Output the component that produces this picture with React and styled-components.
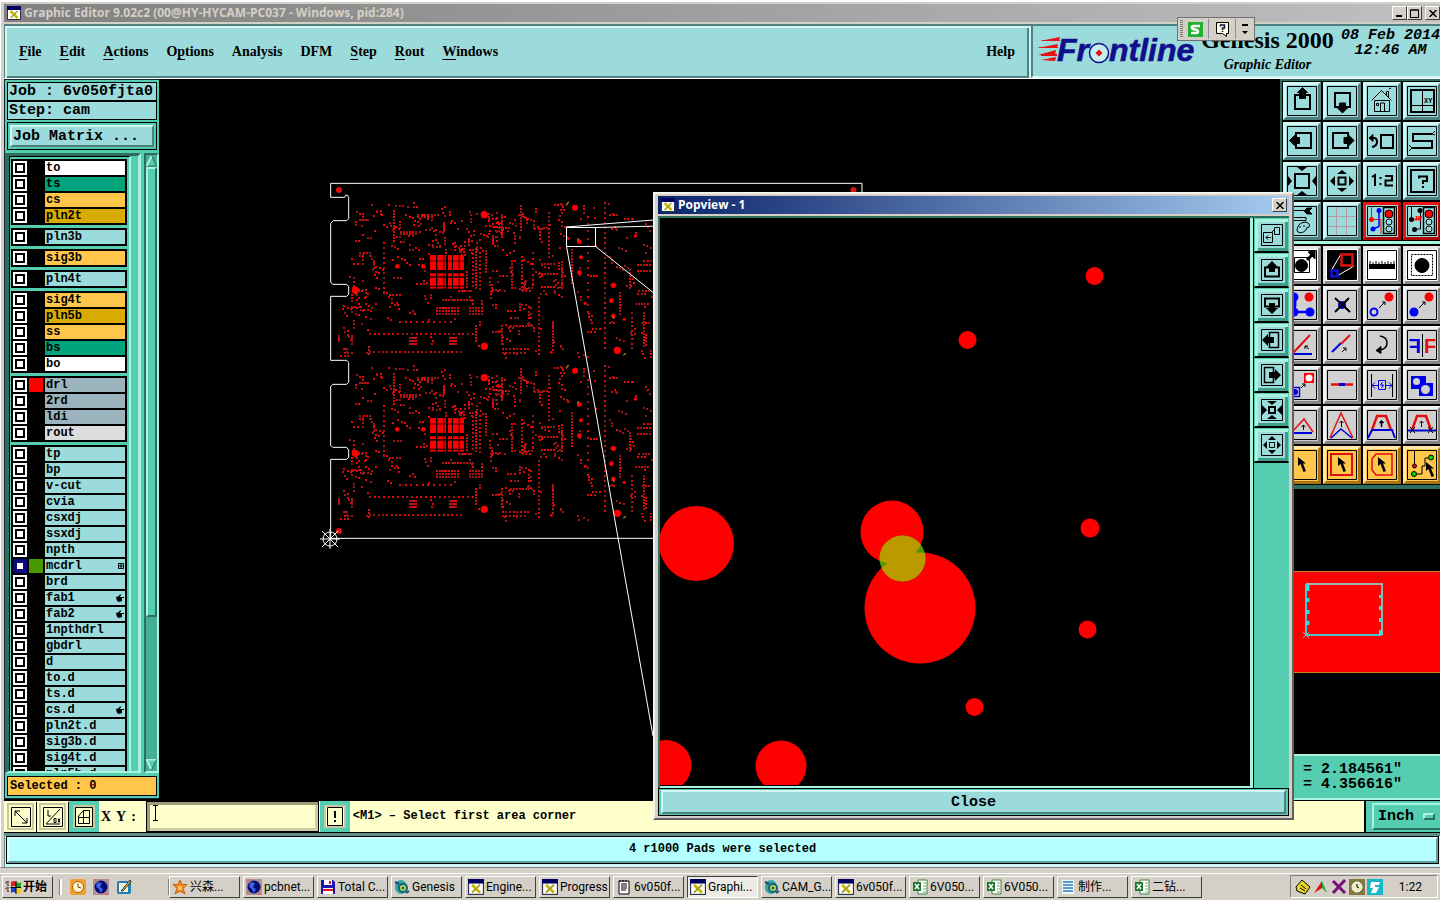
import React from 'react';
import styled, { createGlobalStyle, css } from 'styled-components';

const GlobalStyle = createGlobalStyle`
  * {
    box-sizing: border-box;
  }
  body {
    margin: 0;
    background: #000;
    overflow: hidden;
  }
  button, input, select {
    font: inherit;
    color: inherit;
    margin: 0;
    padding: 0;
    border-radius: 0;
  }
  svg {
    display: block;
    flex: none;
  }
`;

const mono = '"Liberation Mono", "Courier New", monospace';
const serif = '"Liberation Serif", "Times New Roman", serif';
const ui = 'Roboto, "Liberation Sans", "Noto Sans CJK SC", sans-serif';

const cyan = '#9bdbdb';
const cyanLight = '#d3f6f4';
const cyanDark = '#4f8080';
const teal = '#55cdb0';
const tealLight = '#a9f3df';
const tealDark = '#2e6e5e';
const chrome = '#d4d0c8';
const cream = '#ffffcc';

const bevel = (width, light, dark) => css`
  border: ${width}px solid;
  border-color: ${light} ${dark} ${dark} ${light};
`;

/* ---------- window shell ---------- */

const Desktop = styled.div`
  position: relative;
  display: flex;
  flex-direction: column;
  height: 100vh;
  overflow: hidden;
  background: ${chrome};
`;

const EditorWindow = styled.div`
  flex: 1;
  min-height: 0;
  display: flex;
  flex-direction: column;
  padding: 2px 0 0 3px;
  border-top: 2px solid #fff;
  border-left: 1px solid #fff;
  border-bottom: 1px solid #808080;
`;

const TitleBar = styled.div`
  display: flex;
  align-items: center;
  flex: none;
  height: 18px;
  margin-bottom: 2px;
  padding-left: 3px;
  gap: 3px;
  color: ${p => (p.$active ? '#fff' : chrome)};
  background: ${p =>
    p.$active
      ? 'linear-gradient(90deg, #0a246a, #a6caf0)'
      : 'linear-gradient(90deg, #808080, #c0c0c0)'};
  font: bold 12px/16px 'Open Sans', 'Noto Sans', sans-serif;
  white-space: nowrap;
`;

const TitleText = styled.span`
  flex: 1;
`;

const WindowButton = styled.button`
  display: flex;
  align-items: center;
  justify-content: center;
  width: 15px;
  height: 14px;
  background: ${chrome};
  color: #000;
  border: 1px solid;
  border-color: #fff #404040 #404040 #fff;
`;

const WindowButtons = styled.div`
  display: flex;
  flex: none;
  width: ${p => p.$width}px;
  overflow: hidden;
  ${WindowButton} {
    flex: none;
  }
  ${WindowButton}:nth-child(3) {
    margin-left: 3px;
  }
`;

const Header = styled.header`
  display: flex;
  flex: none;
  height: 55px;
  background: ${cyanLight};
  border-top: 2px solid ${cyanDark};
  border-bottom: 1px solid #fff;
`;

const MenuBar = styled.nav`
  flex: 1;
  display: flex;
  align-items: center;
  gap: 18px;
  padding: 0 14px;
  border-left: 1px solid ${cyanDark};
  background: ${cyan};
  font: bold 14px ${serif};
  box-shadow: inset 2px 2px ${cyanLight}, inset -2px -2px ${cyanDark};
`;

const MenuItem = styled.button`
  background: none;
  border: 0;
  &:last-child {
    margin-left: auto;
  }
  u {
    text-underline-offset: 3px;
  }
`;

const Brand = styled.div`
  display: flex;
  flex: none;
  width: 409px;
  margin-left: 2px;
  padding: 2px 0 0 4px;
  overflow: hidden;
  border-left: 2px solid ${cyanDark};
  border-bottom: 2px solid ${cyanLight};
  background: ${cyan};
`;

const Product = styled.div`
  width: 136px;
  margin-left: 3px;
  text-align: center;
  font: bold 24px/24px ${serif};
  white-space: nowrap;
  em {
    display: block;
    font-size: 14px;
    line-height: 26px;
  }
`;

const Clock = styled.time`
  flex: 1;
  padding-left: 6px;
  text-align: center;
  font: italic bold 15px/15px ${mono};
  white-space: nowrap;
`;

const Main = styled.main`
  flex: 1;
  min-height: 0;
  display: flex;
  background: #000;
`;

/* ---------- layer list ---------- */

const Sidebar = styled.aside`
  flex: none;
  display: flex;
  flex-direction: column;
  width: 155px;
  margin-bottom: 1px;
  padding: 2px;
  border: 1px solid #123;
  border-right: 0;
  background: ${teal};
`;

const InfoLine = styled.div`
  height: 19px;
  padding-left: 1px;
  overflow: hidden;
  border: 1px solid #000;
  background: ${cyan};
  font: bold 15px/18px ${mono};
  white-space: pre;
`;

const MatrixFrame = styled.div`
  margin: 2px 0 3px;
  padding: 2px;
  border: 1px solid #000;
`;

const MatrixButton = styled.button`
  display: block;
  width: 100%;
  height: 22px;
  padding-left: 1px;
  background: ${cyan};
  ${bevel(2, cyanLight, cyanDark)}
  font: bold 15px/15px ${mono};
  text-align: left;
`;

const LayerPane = styled.div`
  flex: 1;
  min-height: 0;
  display: flex;
  gap: 3px;
  margin: 0 -2px;
`;

const LayerScroll = styled.div`
  flex: 1;
  overflow: hidden;
  border: solid;
  border-width: 3px 3px 2px 4px;
  border-color: ${tealDark} ${tealLight} ${tealLight} ${tealDark};
`;

const LayerList = styled.div`
  display: flex;
  flex-direction: column;
  gap: 3px;
  width: 122px;
  padding: 2px 2px 0 1px;
  border: 1px solid #000;
  border-right: 2px solid ${tealLight};
`;

const LayerGroup = styled.div`
  padding: 2px 2px 0;
  background: #000;
`;

const LayerRow = styled.label`
  display: flex;
  gap: 2px;
  height: 16px;
  padding-bottom: 2px;
`;

const LayerCheck = styled.input`
  appearance: none;
  flex: none;
  width: 14px;
  height: 14px;
  background: #fff;
  border: ${p => (p.$active ? '4px solid #0a0a80' : '2px solid #fff')};
  box-shadow: inset 0 0 0 ${p => (p.$active ? '0' : '2px')} #000;
`;

const LayerColor = styled.span`
  flex: none;
  width: 14px;
  background: ${p => p.$color || '#000'};
`;

const LayerName = styled.span`
  flex: 1;
  display: flex;
  align-items: center;
  justify-content: space-between;
  padding: 0 1px;
  background: ${p => p.$fill};
  font: bold 12px/14px ${mono};
  white-space: nowrap;
`;

const ScrollTrack = styled.div`
  display: flex;
  flex-direction: column;
  width: 15px;
  border: 2px solid;
  border-color: ${tealDark} ${tealLight} ${tealLight} ${tealDark};
  background: #45ae97;
`;

const ScrollThumb = styled.div`
  flex: 0 0 73%;
  background: ${teal};
  ${bevel(2, tealLight, tealDark)}
`;

const ScrollSpace = styled.div`
  flex: 1;
`;

const SelectedCount = styled.output`
  display: block;
  height: 20px;
  margin-top: 3px;
  padding-left: 2px;
  border: 1px solid #000;
  background: #ffc64b;
  font: bold 12px/18px ${mono};
`;

/* ---------- board canvas ---------- */

const Canvas = styled.section`
  flex: 1;
  min-width: 0;
  overflow: hidden;
  background: #000;
`;

/* ---------- tool column ---------- */

const ToolColumn = styled.aside`
  flex: none;
  display: flex;
  flex-direction: column;
  width: 160px;
  overflow: hidden;
  border-top: 2px solid ${tealDark};
  border-left: 2px solid ${tealDark};
`;

const ToolGrid = styled.div`
  display: grid;
  grid-template-columns: repeat(4, 38px);
  gap: 2px;
  padding: 1px 0 1px 1px;
  background: #000;
  & + & {
    border-top: 3px solid ${tealLight};
    padding-top: 2px;
    border-bottom: 4px solid ${tealDark};
  }
`;

const toolTones = {
  cyan: [cyan, cyanLight, cyanDark],
  red: [cyan, '#f01010', '#b00808'],
  white: ['#fff', '#e4e4e4', '#8c8c8c'],
  gray: ['#d0d0d0', '#f2f2f2', '#858585'],
  orange: ['#ffc64b', '#ffe7ae', '#a87510']
};

const ToolButton = styled.button`
  display: flex;
  align-items: center;
  justify-content: center;
  width: 38px;
  height: 38px;
  background: ${p => toolTones[p.$tone][0]};
  ${p => bevel(3, toolTones[p.$tone][1], toolTones[p.$tone][2])}
`;

const Overview = styled.div`
  flex: 1;
  min-height: 0;
  overflow: hidden;
  background: #000;
`;

const Coordinates = styled.div`
  flex: none;
  height: 46px;
  padding: 6px 0 0 21px;
  border-top: 2px solid ${tealLight};
  border-bottom: 2px solid ${tealLight};
  background: ${teal};
  font: bold 15px/15px ${mono};
  white-space: pre;
`;

/* ---------- bottom bars ---------- */

const CommandBar = styled.div`
  flex: none;
  display: flex;
  gap: 1px;
  height: 33px;
  padding-left: 1px;
  border-top: 1px solid #000;
  border-bottom: 1px solid #000;
  background: ${cream};
  font: bold 12px/31px ${mono};
`;

const SnapButton = styled.button`
  display: flex;
  align-items: center;
  justify-content: center;
  width: ${p => (p.$on ? 30 : 31)}px;
  background: ${cream};
  border: ${p => (p.$on ? `4px solid ${teal}` : `2px solid ${cream}`)};
  box-shadow: ${p =>
    p.$on ? 'inset 0 0 0 2px #c8c8a0' : 'inset 0 0 0 2px #c8c8a0, 1px 1px #000'};
`;

const XYField = styled.label`
  position: relative;
  display: flex;
  padding-left: 1px;
  gap: 10px;
  white-space: pre;
  font: bold 14px/31px ${serif};
  word-spacing: 2px;
`;

const XYInput = styled.input`
  width: 173px;
  padding-left: 4px;
  background: ${cream};
  border: 1px solid #000;
  box-shadow: inset 3px 3px #a09c78, inset -3px -3px #cfcfa6;
`;

const TextPointer = styled.span`
  position: absolute;
  left: 52px;
  top: 4px;
`;

const Prompt = styled.div`
  flex: 1;
  padding-left: 2px;
`;

const UnitFrame = styled.div`
  width: 76px;
  padding: 2px 0 2px 6px;
  border-left: 2px solid #000;
  background: ${teal};
`;

const UnitButton = styled.button`
  display: flex;
  align-items: center;
  justify-content: space-between;
  width: 100%;
  height: 27px;
  padding: 0 5px 0 4px;
  background: ${teal};
  ${bevel(2, tealLight, tealDark)}
  border-right: 0;
  font: bold 15px/15px ${mono};
`;

const UnitMark = styled.span`
  width: 12px;
  height: 7px;
  ${bevel(2, tealLight, tealDark)}
`;

const StatusFrame = styled.div`
  flex: none;
  height: 34px;
  padding: 1px 2px 2px;
  border-top: 3px solid #5f8f8b;
  border-left: 1px solid #5f8f8b;
  background: #cff6f4;
`;

const StatusText = styled.div`
  height: 26px;
  background: #b3ffff;
  ${bevel(2, '#d9ffff', '#5d9c9c')}
  outline: 1px solid #000;
  font: bold 12px/21px ${mono};
  text-align: center;
`;

/* ---------- popview window ---------- */

const Popview = styled.section`
  position: absolute;
  left: 653px;
  top: 192px;
  display: flex;
  flex-direction: column;
  width: 641px;
  height: 628px;
  padding: 2px 3px;
  background: ${chrome};
  border: 2px solid;
  border-color: #f4f2ee #606060 #606060 #f4f2ee;
`;

const PopBody = styled.div`
  flex: 1;
  min-height: 0;
  display: flex;
  background: ${teal};
  border: solid ${tealDark};
  border-width: 2px 0 0 2px;
`;

const PopCanvas = styled.div`
  flex: 1;
  overflow: hidden;
  background: #000;
  border: solid ${tealLight};
  border-width: 0 3px 2px 0;
`;

const PopTools = styled.div`
  display: flex;
  flex-direction: column;
  align-items: flex-start;
  width: 36px;
  border-left: 1px solid #000;
`;

const PopTool = styled.button`
  display: flex;
  align-items: center;
  justify-content: center;
  width: 35px;
  height: 35px;
  background: ${cyan};
  border: 1px solid ${teal};
  border-bottom: 2px solid #000;
  box-shadow: inset 3px 3px ${tealLight}, inset -3px -3px #3f9c86;
`;

const CloseFrame = styled.div`
  flex: none;
  padding: 1px 2px;
  border: 1px solid #000;
  background: ${teal};
`;

const CloseButton = styled.button`
  display: block;
  width: 100%;
  height: 24px;
  background: ${cyan};
  ${bevel(2, cyanLight, cyanDark)}
  font: bold 15px/15px ${mono};
`;

/* ---------- input method bar ---------- */

const ImeBar = styled.div`
  position: absolute;
  right: 185px;
  top: 17px;
  display: flex;
  align-items: center;
  gap: 5px;
  width: 78px;
  height: 24px;
  padding: 0 2px;
  background: ${chrome};
  border: 1px solid #707070;
`;

const ImeGrip = styled.span`
  width: 3px;
  height: 18px;
  background: repeating-linear-gradient(#777 0 1px, ${chrome} 1px 2px);
`;

const ImeButton = styled.button`
  display: flex;
  align-items: center;
  justify-content: center;
  height: 20px;
  background: none;
  border: 0;
  & + & {
    padding-left: 6px;
    border-left: 1px solid #8a8a9a;
  }
`;

/* ---------- taskbar ---------- */

const Taskbar = styled.footer`
  flex: none;
  display: flex;
  align-items: center;
  height: 32px;
  padding: 5px 2px 0 2px;
  background: linear-gradient(${chrome} 5px, #fff 5px 6px, ${chrome} 6px);
  font: 12px/18px ${ui};
`;

const TaskButton = styled.button`
  display: flex;
  align-items: center;
  gap: 2px;
  flex: none;
  width: ${p => p.$width || 71}px;
  height: 22px;
  padding-left: 2px;
  white-space: nowrap;
  background: ${p => (p.$pressed ? '#edebe6' : chrome)};
  border: 1px solid;
  border-color: ${p =>
    p.$pressed ? '#404040 #fff #fff #404040' : '#fff #404040 #404040 #fff'};
  font-weight: ${p => (p.$bold ? 'bold' : 'normal')};
`;

const QuickLaunch = styled.div`
  display: flex;
  gap: 7px;
  width: 109px;
  margin: 0 0 0 7px;
  padding-left: 8px;
  border-left: 2px solid #fff;
  border-right: 1px solid #808080;
  box-shadow: -1px 0 #808080;
`;

const QuickLink = styled.button`
  border: 0;
  background: none;
`;

const TaskList = styled.div`
  flex: 1;
  display: flex;
  gap: 3px;
`;

const Tray = styled.div`
  display: flex;
  align-items: center;
  gap: 2px;
  width: 148px;
  height: 23px;
  padding: 0 15px 0 4px;
  border: 1px solid;
  border-color: #808080 #fff #fff #808080;
  time {
    margin-left: auto;
  }
`;

/* ---------- board data, in thirds of a canvas unit ---------- */

const HALF = 489;

// x, y, count, step x, step y
const runs = [
  [150, 491, 23, 14, 0],
  [150, 545, 22, 13, 0],
  [240, 456, 10, 17, 0],
  [370, 389, 11, 9, 0],
  [352, 415, 8, 9, 0], [352, 423, 8, 9, 0], [352, 431, 8, 9, 0],
  [450, 415, 5, 9, 0], [450, 423, 5, 9, 0], [450, 431, 5, 9, 0],
  [270, 503, 4, 6, 0], [270, 512, 4, 6, 0], [270, 521, 4, 6, 0],
  [390, 503, 4, 6, 0], [390, 512, 4, 6, 0], [390, 521, 4, 6, 0],
  [338, 512, 1, 6, 0], [332, 500, 1, 6, 0], [336, 521, 1, 6, 0],
  [295, 134, 7, 10, 0], [295, 142, 3, 10, 0],
  [242, 192, 6, 9, 0], [242, 186, 6, 9, 0],
  [222, 122, 11, 0, 9],
  [192, 220, 11, 0, 15],
  [460, 240, 10, 0, 12], [468, 236, 14, 0, 9],
  [440, 305, 6, 0, 9],
  [480, 248, 10, 0, 12],
  [497, 244, 8, 0, 9],
  [577, 274, 10, 0, 9],
  [605, 262, 10, 0, 11],
  [546, 136, 8, 0, 9], [532, 130, 7, 0, 14],
  [604, 108, 9, 0, 9],
  [372, 160, 5, 0, 6],
  [657, 384, 14, 0, 13],
  [805, 140, 14, 0, 22],
  [757, 240, 12, 0, 9],
  [700, 456, 7, 0, 9],
  [688, 130, 12, 0, 12],
  [727, 306, 7, 0, 8],
  [640, 250, 7, 0, 16],
  [666, 283, 5, 9, 0], [666, 311, 6, 9, 0], [666, 352, 5, 9, 0],
  [855, 100, 30, 0, 15],
  [931, 300, 7, 0, 9],
  [953, 286, 5, 9, 0], [953, 304, 5, 9, 0], [958, 364, 4, 10, 0],
  [972, 430, 12, 0, 9],
  [936, 430, 9, 0, 13],
  [900, 370, 8, 0, 9],
  [948, 402, 5, 9, 0],
  [548, 536, 8, 11, 0], [548, 548, 7, 11, 0],
  [572, 468, 8, 9, 0], [468, 468, 6, 0, 9],
  [546, 468, 7, 0, 9],
  [57, 497, 4, 0, 5], [97, 497, 4, 0, 5], [72, 536, 3, 5, 0],
  [120, 150, 5, 6, 0],
  [418, 364, 6, 7, 0]
];

// x, y, width, height, number of small clusters
const fields = [
  [100, 95, 130, 140, 22],
  [230, 95, 230, 145, 42],
  [460, 120, 150, 110, 30],
  [85, 240, 80, 160, 26],
  [160, 240, 165, 155, 15],
  [360, 200, 130, 45, 14],
  [500, 235, 120, 130, 22],
  [610, 95, 125, 275, 36],
  [745, 95, 80, 460, 16],
  [860, 95, 135, 180, 16],
  [860, 280, 135, 260, 20],
  [60, 370, 400, 80, 24],
  [60, 450, 90, 105, 12],
  [460, 380, 190, 170, 26],
  [660, 450, 75, 100, 6]
];

const padPaths = (() => {
  let seed = 4711;
  const rand = () => {
    seed = (seed * 16807) % 2147483647;
    return seed / 2147483647;
  };
  const out = { bright: '', dim: '' };
  const put = (x, y) => {
    const key = rand() > 0.42 ? 'bright' : 'dim';
    [0, HALF].forEach(shift => {
      out[key] += `M${Math.round(x / 3)} ${Math.round((y + shift) / 3)}h2v2h-2z`;
    });
  };
  runs.forEach(([x, y, n, dx, dy]) => {
    for (let i = 0; i < n; i++) put(x + i * dx - 3, y + i * dy - 3);
  });
  fields.forEach(([x, y, w, h, n]) => {
    for (let i = 0; i < n; i++) {
      const px = x + rand() * w;
      const py = y + rand() * h;
      const across = rand() > 0.5;
      const len = 1 + Math.floor(rand() * 3);
      const slant = rand() > 0.6 ? 5 : 0;
      for (let k = 0; k < len; k++) {
        put(px + (across ? k * 10 : k * slant), py + (across ? k * slant : k * 10));
      }
    }
  });
  return out;
})();

const holes = [
  [493, 134, 11], [106, 361, 11], [232, 289, 7], [310, 289, 7], [493, 529, 11],
  [765, 113, 9], [778, 215, 7], [783, 262, 6], [778, 308, 7], [880, 346, 8],
  [874, 392, 7], [880, 438, 7], [892, 541, 11], [913, 448, 5], [796, 400, 5],
  [745, 206, 4], [694, 547, 4], [946, 198, 5]
];

const gridColumns = [[330, 18], [352, 18], [373, 5], [384, 12], [399, 17], [419, 13]];
const gridRows = [[255, 17], [274, 26], [310, 9], [323, 24], [350, 6]];

const BoardHalf = ({ shift }) => (
  <g transform={`translate(0 ${shift})`} fill="#f00">
    {holes.map(([x, y, r]) => <circle key={`${x}-${y}`} cx={x} cy={y} r={r} />)}
    {gridColumns.map(([x, w]) =>
      gridRows.map(([y, h]) => <rect key={`${x}-${y}`} x={x} y={y} width={w} height={h} />)
    )}
    <path d="M738 106l8-10M774 204v8M878 440l5 6M910 556l8-6" stroke="#b87a20" strokeWidth="4" />
  </g>
);

const Board = () => (
  <svg width="1121" height="721" viewBox="159 79 1121 721" role="img" aria-label="Board">
    <g transform="translate(320 170)">
      <path d={padPaths.bright} fill="#e00808" shapeRendering="crispEdges" />
      <path d={padPaths.dim} fill="#981818" shapeRendering="crispEdges" />
      <g transform="scale(0.33333)">
        <BoardHalf shift={0} />
        <BoardHalf shift={HALF} />
        <circle cx="57" cy="60" r="9" fill="#e01010" />
        <circle cx="57" cy="1083" r="9" fill="#e01010" />
        <circle cx="1600" cy="60" r="9" fill="#e01010" />
        <path
          d="M1626 1105V40H32V82H74L77 76H83L86 82V146L80 152H40L32 160V336L38 343H80L86 350V373L80 379H32V571H80L86 577V637L80 643H38L32 650V826L38 832H80L86 840V862L80 868H32V1105Z"
          fill="none"
          stroke="#fff"
          strokeWidth="3"
        />
      </g>
    </g>
    <g fill="none" stroke="#fff">
      <path d="M566.5 227.5H595.5V246.5H566.5Z" />
      <path d="M566 227L660 219.500M595 227.500L660 226M595 246L660 298M566.500 246L653 736" />
      <circle cx="330" cy="539" r="7" />
      <path d="M330 529V549M320 539H340M322 531L338 547M338 531L322 547" />
    </g>
  </svg>
);

const OverviewMap = () => (
  <svg width="158" height="265" viewBox="1282 489 158 265" role="img" aria-label="Overview">
    <path d="M1281 571.500H1441V672.500H1281Z" fill="#f00" stroke="#d08020" />
    <path d="M1306 584H1382V635" fill="none" stroke="#9ab4b4" strokeWidth="2" />
    <path d="M1306 584V635H1382" fill="none" stroke="#45c8d0" strokeWidth="2" />
    <path
      d="M1308 585v6M1308 598v4M1308 610v4M1308 621v4M1380.500 595v3M1380.500 606v4M1380.500 618v4M1380.500 630v5"
      stroke="#20e8e8"
      strokeWidth="3"
    />
    <path d="M1303 632l6 6M1309 632l-6 6" stroke="#9ab4b4" />
  </svg>
);

const PopviewDrawing = () => (
  <svg width="590" height="567" viewBox="660 218 590 567" role="img" aria-label="Magnified area">
    <defs>
      <clipPath id="drilled">
        <circle cx="892" cy="532" r="31.500" />
        <circle cx="920" cy="608" r="55.500" />
      </clipPath>
    </defs>
    <g fill="#f00">
      <circle cx="696.500" cy="543.500" r="37.500" />
      <circle cx="892" cy="532" r="31.500" />
      <circle cx="920" cy="608" r="55.500" />
      <circle cx="967.500" cy="340" r="9" />
      <circle cx="1094.500" cy="276" r="9" />
      <circle cx="1090" cy="528" r="9.500" />
      <circle cx="1087.500" cy="629.500" r="9" />
      <circle cx="974.500" cy="707" r="9" />
      <circle cx="666" cy="765.500" r="25.500" />
      <circle cx="781" cy="766" r="25.500" />
    </g>
    <circle cx="902.500" cy="558.500" r="23" fill="#4b9900" />
    <circle cx="902.500" cy="558.500" r="23" fill="#bb9a00" clipPath="url(#drilled)" />
  </svg>
);

/* ---------- icons ---------- */

const AppIcon = ({ size = 14 }) => (
  <svg width={size} height={size} viewBox="0 0 14 14">
    <path d="M0 0h14v14H0z" fill="#303050" />
    <path d="M0 0h14v4H0z" fill="#000060" />
    <path d="M1 4h12v9H1z" fill="#fff" />
    <path d="M3.500 5l7 7" stroke="#c8b800" strokeWidth="2.500" />
    <path d="M10.500 5l-7 7" stroke="#a09c20" strokeWidth="1.500" />
  </svg>
);

const Cursor = ({ x, y }) => (
  <path
    transform={`translate(${x} ${y})`}
    d="M0 0v9l2.500-2 3 8 2.500-1-3-7.500h3z"
    fill="#000"
    stroke="none"
  />
);

const Signal = () => (
  <g>
    <path d="M16.500 1.500h11v26h-11z" fill="none" stroke="#000" strokeWidth="1.500" />
    <circle cx="22" cy="8" r="4" fill="#f00" stroke="#000" />
    <circle cx="22" cy="16" r="3" fill="none" stroke="#000" />
    <circle cx="22" cy="23" r="3" fill="none" stroke="#000" />
  </g>
);

const letter = { fontFamily: 'Liberation Mono, monospace', fontWeight: 700, stroke: 'none' };

const glyphs = {
  up: <><path d="M8 9h15v14H8z" strokeWidth="2" /><path d="M15.500 1.500l5 5h-2v6h-6v-6h-2z" fill="#000" /></>,
  down: <><path d="M8 7h15v14H8z" strokeWidth="2" /><path d="M15.500 27l5-5h-2v-5h-6v5h-2z" fill="#000" /></>,
  home: (
    <path d="M4.500 14.500l10-10 10 10M7.500 14.500v11h15v-11zM17.500 25v-8h-4v8M9.500 17.500h2v2h-2zM19.500 9V5.500h2V11M22 3l2-1" />
  ),
  origin: (
    <>
      <path d="M4 4h23v22H4z" strokeWidth="2" />
      <path d="M15.500 4v22M4 19.500h23" />
      <text x="17" y="17" fontSize="7" fill="#000" {...letter}>XY</text>
    </>
  ),
  left: <><path d="M9 7h15v15H9z" strokeWidth="2" /><path d="M2.500 14.500l5-5v2h5v6h-5v2z" fill="#000" /></>,
  right: <><path d="M6 7h15v15H6z" strokeWidth="2" /><path d="M27 14.500l-5-5v2h-5v6h5v2z" fill="#000" /></>,
  previous: (
    <>
      <path d="M14 9h12v13H14z" strokeWidth="2" />
      <path d="M5 12h2q3 0 3 4t-5 5" strokeWidth="2" />
      <path d="M2 12l4-3.500v7z" fill="#000" />
    </>
  ),
  serpentine: (
    <>
      <path d="M25 8H6v7h19v7H5" strokeWidth="2" />
      <path d="M25 8l3-3M25 8l3 1M5 22l-3-3M5 22l-3 3" />
    </>
  ),
  fit: (
    <>
      <path d="M8 8h14v14H8z" strokeWidth="2" />
      <path d="M10 1h10l-5 4zM10 29h10l-5-4zM1 10v10l4-5zM29 10v10l-4-5z" fill="#000" stroke="none" />
    </>
  ),
  spread: (
    <>
      <path d="M11.500 11.500h7v7h-7z" strokeWidth="2" />
      <path d="M10 8h10l-5-4zM10 22h10l-5 4zM8 10v10l-5-5zM22 10v10l5-5z" fill="#000" stroke="none" />
    </>
  ),
  scale: <path d="M5 11l3-2v11M13.500 11v2M13.500 17v2M18 10h7v4.500h-6.500V19.500H26" strokeWidth="2" />,
  help: (
    <>
      <path d="M4 4h23v22H4z" strokeWidth="2" />
      <path d="M12 12.500V10.500h8V15h-4v3M16 20v2" strokeWidth="2" />
    </>
  ),
  setup: (
    <>
      <path d="M0 4.500h18M8 11.500h11v3H3v-3z" />
      <path d="M17 5l3-3h5l-3 3 3 3h-5z" fill="#000" />
      <path d="M10 25q0-8 8-9 6 1 4 5-3 0-3 3-5 5-9 1zM13 20v2M17 19v2" />
    </>
  ),
  grid: <path d="M9.500 1v28M19.500 1v28M1 10.500h28M1 20.500h28" stroke="#b59aa2" />,
  netColor: (
    <>
      <path d="M4.500 0v13.500H14V28" stroke="#f00" />
      <path d="M12 4v16.500L6 23" stroke="#00f" strokeWidth="1.500" />
      <circle cx="4.500" cy="13.500" r="2.500" fill="#f00" stroke="none" />
      <circle cx="12" cy="4.500" r="2.500" fill="#00f" stroke="none" />
      <circle cx="6" cy="23" r="2.500" fill="#00f" stroke="none" />
      <Signal />
    </>
  ),
  netBlack: (
    <>
      <path d="M4.500 0v13.500M13.500 4v19H8" />
      <path d="M6 13.500h8M9.500 10v3M12 10v3M14 10v3" stroke="#f00" strokeWidth="1.500" />
      <circle cx="4.500" cy="13.500" r="2.500" fill="#000" stroke="none" />
      <circle cx="13" cy="4.500" r="2.500" fill="#000" stroke="none" />
      <circle cx="7.500" cy="23.500" r="2.500" fill="#000" stroke="none" />
      <Signal />
    </>
  ),
  select: (
    <>
      <path d="M7.500 7.500h15v15h-15z" />
      <circle cx="14.500" cy="15.500" r="6" fill="#000" />
      <path d="M20 10l6-6" strokeWidth="3" />
      <path d="M28 1v8l-7-7z" fill="#000" />
    </>
  ),
  window: (
    <>
      <path d="M1 1h28v28H1z" fill="#000" />
      <path d="M14 4L4 21M27 16L10 26" stroke="#fff" />
      <path d="M14.500 4.500h11v11h-11z" stroke="#e01010" strokeWidth="2.500" />
      <path d="M4.500 20.500h6v6h-6z" stroke="#1010d0" strokeWidth="2.500" />
    </>
  ),
  ruler: (
    <>
      <path d="M2 14h26v5H2z" fill="#000" stroke="none" />
      <path d="M3 11v4M6 12v4M9 11v4M12 12v4M15 11v4M18 12v4M21 11v4M24 12v4M27 11v4" />
    </>
  ),
  area: <><path d="M4.500 4.500h21v21h-21z" strokeDasharray="2 1" /><circle cx="15" cy="15.500" r="7" fill="#000" /></>,
  polyline: (
    <>
      <path d="M7 7q3 8-1 15h20" stroke="#00f" strokeWidth="2.500" />
      <g fill="#00f" stroke="none">
        <circle cx="7" cy="7" r="4.500" />
        <circle cx="7" cy="22" r="4.500" />
        <circle cx="23" cy="22" r="4.500" />
      </g>
      <circle cx="22" cy="7" r="4.500" fill="#f00" stroke="none" />
    </>
  ),
  remove: <><circle cx="15" cy="15" r="4" fill="#0000d8" stroke="none" /><path d="M8 8l15 14M22 8L8 22" strokeWidth="2" /></>,
  copy: (
    <>
      <circle cx="7" cy="22" r="3.500" stroke="#00f" strokeWidth="2" />
      <circle cx="22" cy="7" r="4.500" fill="#f00" stroke="none" />
      <path d="M12 18l6-6M15 12h3v3" />
    </>
  ),
  move: (
    <>
      <circle cx="7" cy="22" r="4.500" fill="#00f" stroke="none" />
      <circle cx="22" cy="7" r="4.500" fill="#f00" stroke="none" />
      <path d="M12 18l6-6M15 12h3v3" />
    </>
  ),
  rotate: (
    <>
      <path d="M1 24h24" stroke="#00d" strokeWidth="2" />
      <path d="M6 23L23 5" stroke="#e01010" strokeWidth="2" />
      <path d="M22 19l-4-3M18 19v-3h3" />
    </>
  ),
  stretch: (
    <>
      <path d="M5 22l9-9" stroke="#00d" strokeWidth="2" />
      <path d="M14 14l9-9" stroke="#e01010" strokeWidth="2" />
      <path d="M15 22l4-4M16 18h3v3" />
    </>
  ),
  turn: <><path d="M13 6q7 1 7 7t-7 7" strokeWidth="1.500" /><path d="M9 20.500l5-4v7z" fill="#000" /></>,
  mirror: (
    <>
      <path d="M15.500 4v23" />
      <text x="17" y="23" fontSize="20" fill="#e01010" {...letter} fontFamily="Liberation Sans">F</text>
      <g transform="scale(-1 1)">
        <text x="-14" y="23" fontSize="20" fill="#00d" {...letter} fontFamily="Liberation Sans">F</text>
      </g>
    </>
  ),
  swap: (
    <>
      <path d="M17 3h10v10H17z" fill="#f00" stroke="none" />
      <circle cx="22" cy="8" r="3.500" fill="#fff" stroke="none" />
      <path d="M3.500 17.500h9v9h-9z" stroke="#00d" strokeWidth="1.500" />
      <circle cx="8" cy="22" r="3" fill="#00d" stroke="none" />
      <path d="M14 18l4-4M15 14h3v3" />
    </>
  ),
  breakLine: <><path d="M4 14.500h22" stroke="#e01010" strokeWidth="2.500" /><path d="M12 14.500h6" stroke="#00d" strokeWidth="3" /></>,
  spacing: (
    <>
      <path d="M4.500 4v23M25.500 4v23" />
      <path d="M5 15.500h6M19 15.500h6M8 12.500l-3 3 3 3M22 12.500l3 3-3 3M11.500 10.500h7v9h-7zM15.500 12l-2 3h3l-2 3" stroke="#00d" />
    </>
  ),
  merge: (
    <>
      <path d="M4 6h15v7h7v13H12v-7H4z" fill="#0000e8" stroke="none" />
      <circle cx="9.500" cy="11.500" r="3.500" fill="#d0d0d0" stroke="none" />
      <circle cx="18.500" cy="19.500" r="4.500" fill="#d0d0d0" stroke="none" />
    </>
  ),
  ridge: <><path d="M5 22L17 9l9 13" stroke="#e01010" strokeWidth="1.500" /><path d="M2 23h23" stroke="#00d" strokeWidth="2" /><path d="M16.500 20v-5M14.500 17l2-2 2 2" /></>,
  peak: (
    <>
      <path d="M3 28L14 3l12 25" stroke="#e01010" strokeWidth="1.500" />
      <path d="M4 28l10-9 11 9" stroke="#00d" strokeWidth="1.500" />
      <path d="M14.500 17v-6M12.500 13l2-2 2 2" />
    </>
  ),
  plateau: (
    <>
      <path d="M5 20l5-14h9l5 14" stroke="#e01010" strokeWidth="2.500" />
      <path d="M1 28l4-8h20l3 8" stroke="#00d" strokeWidth="2" />
      <path d="M14.500 17v-6M12.500 13l2-2 2 2" strokeWidth="1.500" />
    </>
  ),
  crossed: (
    <>
      <path d="M5 20l5-14h9l5 14" stroke="#e01010" strokeWidth="2.500" />
      <path d="M1 20.500h28" stroke="#00d" strokeWidth="2" />
      <path d="M14.500 17v-6M12.500 13l2-2 2 2" />
      <path d="M3 17l5 6M8 17l-5 6M21 17l5 6M26 17l-5 6" />
    </>
  ),
  pick: <Cursor x={11} y={7} />,
  pickFrame: <><path d="M4 4h21v21H4z" stroke="#e01010" strokeWidth="2" /><Cursor x={11} y={7} /></>,
  pickPolygon: <><path d="M9 4h16v21H9l-4-5V9z" stroke="#e01010" strokeWidth="1.500" /><Cursor x={11} y={7} /></>,
  pickNet: (
    <>
      <path d="M7.500 0v15M7 24h8v-8h3V8h5" />
      <circle cx="7.500" cy="16" r="2" fill="#e01010" />
      <circle cx="7" cy="24" r="2.500" fill="#0d0" />
      <circle cx="24" cy="7.500" r="2.500" fill="#0d0" />
      <Cursor x={19} y={12} />
    </>
  )
};

const ToolIcon = ({ name, size = 30 }) => (
  <svg width={size} height={size} viewBox="0 0 30 30" fill="none" stroke="#000">
    <path d="M.5 .5h29v29H.5z" />
    {glyphs[name]}
  </svg>
);

const smallGlyphs = {
  region: <path d="M2.500 8.500h9v10h-9zM13.500 3.500h5v7h-5zM11 8l3-3M10 13.500H5M7 11.500l-2 2 2 2" />,
  up: <><path d="M4 8.500h14v9H4z" strokeWidth="2" /><path d="M11 2l6 6h-3v5H8V8H5z" fill="#000" stroke="none" /></>,
  down: <><path d="M4 4.500h14v8H4z" strokeWidth="2" /><path d="M11 20l6-6h-3V9H8v5H5z" fill="#000" stroke="none" /></>,
  left: <><path d="M8.500 3.500h9v15h-9z" strokeWidth="1.500" /><path d="M1 11l6-6v3h6v6H7v3z" fill="#000" stroke="none" /></>,
  right: <><path d="M3.500 3.500h9v15h-9z" strokeWidth="1.500" /><path d="M20 11l-6-6v3H8v6h6v3z" fill="#000" stroke="none" /></>,
  fit: (
    <>
      <path d="M8 8h6v6H8z" strokeWidth="2" />
      <path d="M6 2h10l-5 4zM6 20h10l-5-4zM1 6v10l5-5zM21 6v10l-5-5z" fill="#000" stroke="none" />
    </>
  ),
  spread: (
    <>
      <path d="M8.500 8.500h5v5h-5z" />
      <path d="M7 6h8l-4-4zM7 16h8l-4 4zM6 7v8l-4-4zM16 7v8l4-4z" fill="#000" stroke="none" />
    </>
  )
};

const SmallIcon = ({ name }) => (
  <svg width="22" height="22" viewBox="0 0 22 22" fill="none" stroke="#000">
    <path d="M.5 .5h21v21H.5z" />
    {smallGlyphs[name]}
  </svg>
);

const FrontlineLogo = () => (
  <svg width="160" height="46" viewBox="0 0 160 46" role="img" aria-label="Frontline">
    <path
      d="M3 13l20-4-1 4zM0 20l21-4-1 4zM1 27l18-5-1 5zM5 12h18v1H5zM2 19h19v1H2zM4 26h16v2H4zM4 32l15-3-1 4z"
      fill="#e81010"
    />
    <g
      fontFamily="Liberation Sans"
      fontStyle="italic"
      fontWeight="700"
      fontSize="32"
      fill="#10108c"
      stroke="#10108c"
      strokeWidth="0.600"
    >
      <text x="20" y="33">Fr</text>
      <text x="72" y="33">ntline</text>
    </g>
    <circle cx="62" cy="25" r="9.500" fill="#c6eef0" stroke="#10108c" strokeWidth="1.500" />
    <path d="M62 21.500l3.500 3.500-3.500 3.500-3.500-3.500z" fill="#e81010" />
  </svg>
);

const taskIcons = {
  start: (
    <>
      <path d="M6 3q3-2 5 0v5q-2-2-5 0z" fill="#e02020" />
      <path d="M11 3q3 2 5 0v5q-3 2-5 0z" fill="#20a020" />
      <path d="M6 9q3-2 5 0v5q-2-2-5 0z" fill="#2040e0" />
      <path d="M11 9q3 2 5 0v5q-3 2-5 0z" fill="#e8d020" />
      <path d="M11 2v13M5.500 8.500H16M1 3h3M2 6h2M1 9h3M2 12h2" stroke="#000" />
      <path d="M0 4h3M0 10h3" stroke="#e02020" />
    </>
  ),
  clock: (
    <>
      <rect width="16" height="16" rx="2" fill="#f0a030" />
      <circle cx="8" cy="8" r="5.500" fill="#fff4d0" stroke="#b06000" />
      <path d="M8 4.500V8l3 1" stroke="#604000" fill="none" />
    </>
  ),
  globe: (
    <>
      <rect width="16" height="16" fill="#b09090" />
      <circle cx="8" cy="8" r="6.500" fill="#000c78" />
      <path d="M4 3l5 1-2 4 3 2-2 4-3-5-2-1z" fill="#4060e0" />
      <path d="M1 1h4M11 15h4" stroke="#f05050" />
    </>
  ),
  pen: (
    <>
      <rect x="1" y="2" width="14" height="13" rx="2" fill="#2080b0" />
      <path d="M3 4h9v9H3z" fill="#f8f8e0" />
      <path d="M5 12l9-11 1 2-8 9z" fill="#e0b830" stroke="#333" />
    </>
  ),
  star: (
    <>
      <path d="M8 1l2 4.500h5l-4 4 2 5.500-5-3-5 3 2-5.500-4-4h5z" fill="#f08820" stroke="#c86010" />
      <path d="M6 7h4v4H6z" fill="#ffc060" />
    </>
  ),
  disk: (
    <>
      <path d="M1 1h12l2 2v12H1z" fill="#1818b0" />
      <path d="M4 1h8v5H4zM3 9h10v6H3z" fill="#fff" />
      <path d="M9 2h2v3H9zM3 10h10v2H3z" fill="#e01010" />
    </>
  ),
  genesis: (
    <>
      <ellipse cx="7" cy="8" rx="6" ry="7" fill="#30a8a0" />
      <circle cx="9" cy="9" r="4" fill="#c8e040" stroke="#106080" strokeWidth="2" />
      <circle cx="9" cy="9" r="1.500" fill="#106080" />
      <path d="M1 3l4 2M15 12l-3 2" stroke="#184878" strokeWidth="2" />
    </>
  ),
  note: (
    <>
      <path d="M3 2h10v13H3z" fill="#fff" stroke="#000" />
      <path d="M5 5h6M5 7h6M5 9h6M5 11h5M4 1v2M7 1v2M10 1v2" stroke="#000" />
    </>
  ),
  excel: (
    <>
      <path d="M6 1h9v14H6z" fill="#fff" stroke="#408040" />
      <path d="M1 3h8v9H1z" fill="#207830" />
      <path d="M3 5l4 5M7 5l-4 5" stroke="#fff" strokeWidth="1.500" />
      <path d="M11 4h3M11 7h3M11 10h3M11 13h3" stroke="#70a870" />
    </>
  ),
  list: <><path d="M2 1h12v14H2z" fill="#eef8ff" /><path d="M3 3h10M3 6h10M3 9h10M3 12h10" stroke="#2878c0" strokeWidth="1.500" /></>,
  tag: <path d="M1 8l6-7 8 7-5 7-8-3zM5 9l5 3M6 6l5 4" fill="#e8d820" stroke="#000" />,
  acrobat: <><path d="M1 14L9 2v7z" fill="#e01010" /><path d="M9 2l5 12-5-5z" fill="#20b030" /></>,
  cross: <path d="M2 2l12 12M14 1L2 14" stroke="#781078" strokeWidth="3" />,
  alarm: (
    <>
      <rect width="16" height="16" fill="#807840" />
      <circle cx="8" cy="8" r="5" fill="#f0ecc8" stroke="#fff" />
      <path d="M8 5v3l2 1" stroke="#000" fill="none" />
    </>
  ),
  flash: <><rect width="16" height="16" fill="#18b8c8" /><path d="M4 3h9l-1 3H8v2h4l-3 6H4l2-5H3z" fill="#fff" /></>
};

const TaskIcon = ({ name }) =>
  name === 'app' ? (
    <AppIcon size={16} />
  ) : (
    <svg width="16" height="16" viewBox="0 0 16 16">{taskIcons[name]}</svg>
  );

const Arrow = ({ down }) => (
  <svg width="11" height="12" viewBox="0 0 11 12">
    <path
      d={down ? 'M.5 .5h10L5.500 11z' : 'M.5 11h10L5.500 .5z'}
      fill={teal}
      stroke={tealDark}
    />
    <path d={down ? 'M10 .5H.5L5 10' : 'M.5 11L5.500 1'} fill="none" stroke={tealLight} strokeWidth="2" />
  </svg>
);

const Hand = () => (
  <svg width="8" height="8" viewBox="0 0 8 8">
    <path d="M0 3l3-1 1-2 1 1-1 2h4v1H6v3L3 8 1 7z" fill="#000" />
  </svg>
);

const Matrix = () => (
  <svg width="6" height="6" viewBox="0 0 6 6">
    <path d="M.5 .5h5v5h-5zM3 0v6M0 3h6" fill="none" stroke="#000" />
  </svg>
);

/* ---------- content ---------- */

// label, position of the underlined letter
const menus = [
  ['File', 0], ['Edit', 0], ['Actions', 0], ['Options', 1], ['Analysis'],
  ['DFM'], ['Step', 0], ['Rout', 0], ['Windows', 0], ['Help']
];

const W = '#fff';
const G = '#00a47c';
const O = '#ffc64b';
const D = '#d9ab00';
const B = '#9ab3bd';

const layerGroups = [
  [['to', W], ['ts', G], ['cs', O], ['pln2t', D]],
  [['pln3b', cyan]],
  [['sig3b', O]],
  [['pln4t', cyan]],
  [['sig4t', O], ['pln5b', D], ['ss', O], ['bs', G], ['bo', W]],
  [['drl', B, '#f00'], ['2rd', B], ['ldi', B], ['rout', '#dcdcdc']],
  [
    ['tp', cyan], ['bp', cyan], ['v-cut', cyan], ['cvia', cyan], ['csxdj', cyan],
    ['ssxdj', cyan], ['npth', cyan], ['mcdrl', cyan, '#479a00', 'matrix'], ['brd', cyan],
    ['fab1', cyan, null, 'hand'], ['fab2', cyan, null, 'hand'], ['1npthdrl', cyan],
    ['gbdrl', cyan], ['d', cyan], ['to.d', cyan], ['ts.d', cyan],
    ['cs.d', cyan, null, 'hand'], ['pln2t.d', cyan], ['sig3b.d', cyan],
    ['sig4t.d', cyan], ['pln5b.d', cyan]
  ]
];

const viewTools = [
  'up', 'down', 'home', 'origin', 'left', 'right', 'previous', 'serpentine',
  'fit', 'spread', 'scale', 'help', 'setup', 'grid', 'netColor', 'netBlack'
];

const editTools = [
  ['white', ['select', 'window', 'ruler', 'area']],
  ['gray', ['polyline', 'remove', 'copy', 'move']],
  ['gray', ['rotate', 'stretch', 'turn', 'mirror']],
  ['gray', ['swap', 'breakLine', 'spacing', 'merge']],
  ['gray', ['ridge', 'peak', 'plateau', 'crossed']],
  ['orange', ['pick', 'pickFrame', 'pickPolygon', 'pickNet']]
];

const tasks = [
  ['star', '兴森...'], ['globe', 'pcbnet...'], ['disk', 'Total C...'], ['genesis', 'Genesis'],
  ['app', 'Engine...'], ['app', 'Progress'], ['note', '6v050f...'], ['app', 'Graphi...', true],
  ['genesis', 'CAM_G...'], ['app', '6v050f...'], ['excel', '6V050...'], ['excel', '6V050...'],
  ['list', '制作...'], ['excel', '二钻...']
];

const MenuLabel = ({ text, mark }) =>
  mark === undefined ? (
    text
  ) : (
    <>
      {text.slice(0, mark)}
      <u>{text[mark]}</u>
      {text.slice(mark + 1)}
    </>
  );

const Layers = () => (
  <LayerPane>
    <LayerScroll>
      <LayerList>
        {layerGroups.map(group => (
          <LayerGroup key={group[0][0]}>
            {group.map(([name, fill, color, mark]) => (
              <LayerRow key={name}>
                <LayerCheck type="checkbox" $active={name === 'mcdrl'} />
                <LayerColor $color={color} />
                <LayerName $fill={fill}>
                  {name}
                  {mark === 'hand' && <Hand />}
                  {mark === 'matrix' && <Matrix />}
                </LayerName>
              </LayerRow>
            ))}
          </LayerGroup>
        ))}
      </LayerList>
    </LayerScroll>
    <ScrollTrack>
      <Arrow />
      <ScrollThumb />
      <ScrollSpace />
      <Arrow down />
    </ScrollTrack>
  </LayerPane>
);

const PopviewWindow = () => (
  <Popview>
    <TitleBar $active>
      <AppIcon />
      <TitleText>Popview - 1</TitleText>
      <WindowButtons $width={17}>
        <WindowButton aria-label="Close window">
          <svg width="8" height="7" viewBox="0 0 8 7">
            <path d="M.5 0l7 7M7.500 0l-7 7" stroke="#000" strokeWidth="1.500" />
          </svg>
        </WindowButton>
      </WindowButtons>
    </TitleBar>
    <PopBody>
      <PopCanvas>
        <PopviewDrawing />
      </PopCanvas>
      <PopTools>
        {['region', 'up', 'down', 'left', 'right', 'fit', 'spread'].map(name => (
          <PopTool key={name} aria-label={name}>
            <SmallIcon name={name} />
          </PopTool>
        ))}
      </PopTools>
    </PopBody>
    <CloseFrame>
      <CloseButton>Close</CloseButton>
    </CloseFrame>
  </Popview>
);

const App = () => (
  <Desktop>
    <GlobalStyle />
    <EditorWindow>
      <TitleBar>
        <AppIcon />
        <TitleText>Graphic Editor 9.02c2 (00@HY-HYCAM-PC037 - Windows, pid:284)</TitleText>
        <WindowButtons $width={48}>
          <WindowButton aria-label="Minimize">
            <svg width="9" height="8" viewBox="0 0 9 8"><path d="M1 6h6v2H1z" /></svg>
          </WindowButton>
          <WindowButton aria-label="Maximize">
            <svg width="9" height="9" viewBox="0 0 9 9">
              <path d="M.5 1h8v7.500h-8zM0 1h9" fill="none" stroke="#000" />
            </svg>
          </WindowButton>
          <WindowButton aria-label="Close editor">
            <svg width="8" height="7" viewBox="0 0 8 7">
              <path d="M.5 0l7 7M7.500 0l-7 7" stroke="#000" strokeWidth="1.500" />
            </svg>
          </WindowButton>
        </WindowButtons>
      </TitleBar>

      <Header>
        <MenuBar>
          {menus.map(([text, mark]) => (
            <MenuItem key={text}>
              <MenuLabel text={text} mark={mark} />
            </MenuItem>
          ))}
        </MenuBar>
        <Brand>
          <FrontlineLogo />
          <Product>
            Genesis 2000
            <em>Graphic Editor</em>
          </Product>
          <Clock>
            08 Feb 2014
            <br />
            12:46 AM
          </Clock>
        </Brand>
      </Header>

      <Main>
        <Sidebar>
          <InfoLine>Job : 6v050fjta0</InfoLine>
          <InfoLine>Step: cam</InfoLine>
          <MatrixFrame>
            <MatrixButton>Job Matrix ...</MatrixButton>
          </MatrixFrame>
          <Layers />
          <SelectedCount>Selected : 0</SelectedCount>
        </Sidebar>
        <Canvas>
          <Board />
        </Canvas>
        <ToolColumn>
          <ToolGrid>
            {viewTools.map(name => (
              <ToolButton key={name} $tone={name.startsWith('net') ? 'red' : 'cyan'} aria-label={name}>
                <ToolIcon name={name} />
              </ToolButton>
            ))}
          </ToolGrid>
          <ToolGrid>
            {editTools.map(([tone, names]) =>
              names.map(name => (
                <ToolButton key={name} $tone={tone} aria-label={name}>
                  <ToolIcon name={name} />
                </ToolButton>
              ))
            )}
          </ToolGrid>
          <Overview>
            <OverviewMap />
          </Overview>
          <Coordinates>{'= 2.184561"\n= 4.356616"'}</Coordinates>
        </ToolColumn>
      </Main>

      <CommandBar>
        <SnapButton aria-label="Snap to point">
          <svg width="22" height="22" viewBox="0 0 22 22" fill="none" stroke="#000">
            <path d="M1.500 1.500h19v19h-19zM5 5l12 12M5 10V5h5M17 12v5h-5" />
          </svg>
        </SnapButton>
        <SnapButton aria-label="Angle">
          <svg width="22" height="22" viewBox="0 0 22 22" fill="none" stroke="#000">
            <path d="M1.500 1.500h19v19h-19zM4 18L18 3M4 18h14M6 4v6h3M12 12.500v4h2v-4zM16 12.500l2 4M18 12.500l-2 4" />
          </svg>
        </SnapButton>
        <SnapButton $on aria-label="Grid">
          <svg width="18" height="22" viewBox="0 0 18 22" fill="none" stroke="#000">
            <path d="M.5 1.500h17v19H.500zM3.500 10l5-5.500h6v13h-11zM8.500 4.500v13M3.500 11.500h11" />
          </svg>
        </SnapButton>
        <XYField>
          X Y :
          <XYInput type="text" />
          <TextPointer>
            <svg width="7" height="16" viewBox="0 0 7 16">
              <path d="M1 .5h5M1 15.500h5M3.500 1v14" fill="none" stroke="#000" />
            </svg>
          </TextPointer>
        </XYField>
        <SnapButton $on aria-label="Warnings">
          <svg width="16" height="19" viewBox="0 0 16 19" fill="none" stroke="#000">
            <path d="M.5 .5h15v18H.5z" />
            <path d="M8 4v7M8 13v2" strokeWidth="2" />
          </svg>
        </SnapButton>
        <Prompt>&lt;M1&gt; – Select first area corner</Prompt>
        <UnitFrame>
          <UnitButton>
            Inch
            <UnitMark />
          </UnitButton>
        </UnitFrame>
      </CommandBar>
      <StatusFrame>
        <StatusText>4 r1000 Pads were selected</StatusText>
      </StatusFrame>
    </EditorWindow>

    <Taskbar>
      <TaskButton $width={51} $bold>
        <TaskIcon name="start" />
        开始
      </TaskButton>
      <QuickLaunch>
        {['clock', 'globe', 'pen'].map(name => (
          <QuickLink key={name} aria-label={name}>
            <TaskIcon name={name} />
          </QuickLink>
        ))}
      </QuickLaunch>
      <TaskList>
        {tasks.map(([icon, text, pressed], i) => (
          <TaskButton key={i} $pressed={pressed}>
            <TaskIcon name={icon} />
            {text}
          </TaskButton>
        ))}
      </TaskList>
      <Tray>
        {['tag', 'acrobat', 'cross', 'alarm', 'flash'].map(name => (
          <TaskIcon key={name} name={name} />
        ))}
        <time>1:22</time>
      </Tray>
    </Taskbar>

    <PopviewWindow />

    <ImeBar>
      <ImeGrip />
      <ImeButton aria-label="Input method">
        <svg width="15" height="15" viewBox="0 0 15 15">
          <rect width="15" height="15" fill="#20b030" />
          <path d="M12 4H6q-3 0-2 2 0 1 3 1.500t3 2Q10 11 8 11H3" fill="none" stroke="#fff" strokeWidth="2.500" />
        </svg>
      </ImeButton>
      <ImeButton aria-label="Input help">
        <svg width="15" height="16" viewBox="0 0 15 16">
          <path d="M1.500 1.500h12v11h-2v3l-4-3h-6z" fill="#ffffe0" stroke="#000" />
          <path d="M5.500 5.500V4h4v3H7.500v2M7.500 10v1" fill="none" stroke="#101040" strokeWidth="1.500" />
        </svg>
      </ImeButton>
      <ImeButton aria-label="Input options">
        <svg width="6" height="14" viewBox="0 0 6 14"><path d="M0 2h6v2H0zM0 9h6l-3 3z" /></svg>
      </ImeButton>
    </ImeBar>
  </Desktop>
);

export default App;
